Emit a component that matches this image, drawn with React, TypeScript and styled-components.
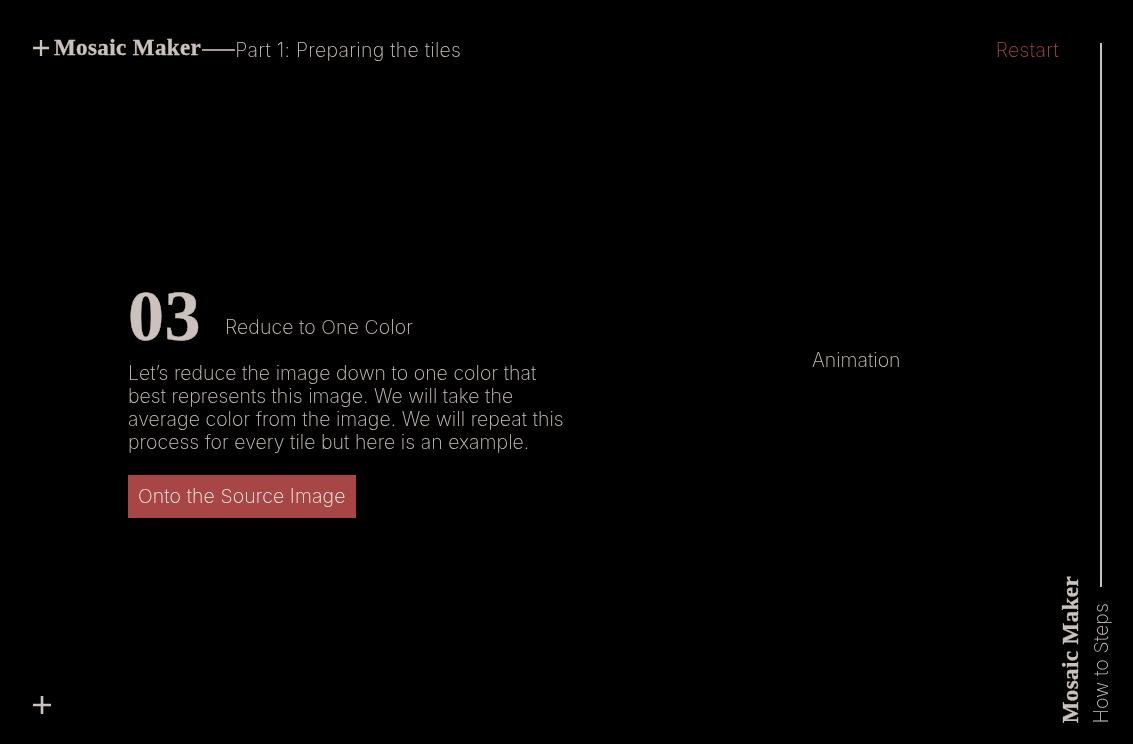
import React from 'react';
import styled, { createGlobalStyle } from 'styled-components';

const colors = {
  TAUPE: '#cbc1bd',
  TAUPE_DIM: '#a39b98',
  RED: '#a84646',
  WHITE: '#f4efee',
};

const sans = `Inter, 'Liberation Sans', sans-serif`;
const serif = `'Liberation Serif', serif`;

const GlobalStyle = createGlobalStyle`
  html, body {
    margin: 0;
    background: #000;
  }
`;

const Page = styled.div`
  display: flex;
  width: 100%;
  height: 100vh;
  overflow: hidden;
  background: #000;
  color: ${colors.TAUPE};
  font-family: ${sans};
  font-weight: 250;
  font-size: 19.5px;
`;

const Main = styled.div`
  flex: 1;
  display: flex;
  flex-direction: column;
  padding: 36px 1px 25px 33px;
  transform: translateZ(0);
`;

const Header = styled.header`
  display: flex;
  align-items: center;
  justify-content: space-between;
  height: 28px;
`;

const HeaderLeft = styled.div`
  display: flex;
  align-items: center;
`;

const Plus = styled.svg`
  flex: none;
  fill: none;
  stroke: ${colors.TAUPE};
  stroke-width: 2.6;
`;

const HeaderPlus = styled(Plus)`
  margin-top: -4px;
`;

const Brand = styled.span`
  margin: -4px 1px 0 5px;
  font-family: ${serif};
  font-size: 23px;
  font-weight: 700;
  line-height: 24px;
  letter-spacing: 0.4px;
  -webkit-text-stroke: 0.3px ${colors.TAUPE};
`;

const Dash = styled.span`
  width: 33px;
  height: 2px;
  background: ${colors.TAUPE_DIM};
`;

const Part = styled.span`
  line-height: 28px;
  letter-spacing: 0.28px;
`;

const Restart = styled.button`
  padding: 0;
  border: 0;
  background: none;
  color: ${colors.RED};
  font: inherit;
  letter-spacing: 0.3px;
`;

const Content = styled.main`
  flex: 1;
  display: flex;
  align-items: flex-start;
  padding: 216px 0 0 95px;
`;

const Step = styled.section`
  width: 445px;
`;

const StepTitle = styled.div`
  display: flex;
  align-items: flex-end;
  gap: 24px;
`;

const StepNumber = styled.span`
  font-family: ${serif};
  font-size: 72px;
  font-weight: 700;
  line-height: 72px;
  letter-spacing: 0.5px;
  -webkit-text-stroke: 0.4px ${colors.TAUPE};
`;

const StepName = styled.span`
  margin-bottom: 11px;
  line-height: 28px;
  letter-spacing: 0.08px;
`;

const StepText = styled.p`
  margin: 10px 0 21px;
  line-height: 23px;
  letter-spacing: 0.04px;
`;

const NextButton = styled.button`
  display: block;
  height: 43px;
  padding: 0 10px 2px;
  border: 0;
  background: ${colors.RED};
  color: ${colors.WHITE};
  font: inherit;
  letter-spacing: 0.1px;
`;

const Animation = styled.div`
  margin: 66px 0 0 239px;
  line-height: 28px;
`;

const Footer = styled.footer`
  display: flex;
  height: 28px;
  align-items: center;
`;

const Rail = styled.aside`
  display: flex;
  align-items: flex-end;
  gap: 8px;
  padding: 43px 21px 21px 0;
  transform: translateZ(0);
`;

const RailBrand = styled.span`
  writing-mode: vertical-rl;
  transform: rotate(180deg);
  font-family: ${serif};
  font-size: 23px;
  font-weight: 700;
  line-height: 22px;
  letter-spacing: 0.4px;
  -webkit-text-stroke: 0.3px ${colors.TAUPE};
`;

const RailTrack = styled.div`
  display: flex;
  flex-direction: column;
  align-items: center;
  align-self: stretch;
`;

const RailLine = styled.div`
  flex: 1;
  width: 2px;
  margin-bottom: 16px;
  background: ${colors.TAUPE};
`;

const RailLabel = styled.span`
  writing-mode: vertical-rl;
  transform: rotate(180deg);
  line-height: 22px;
  letter-spacing: 0.15px;
`;

const App: React.FC = () => (
  <>
    <GlobalStyle />
    <Page>
      <Main>
        <Header>
          <HeaderLeft>
            <HeaderPlus width={16} height={16} viewBox="0 0 18 18">
              <path d="M9 0V18M0 9H18" />
            </HeaderPlus>
            <Brand>Mosaic Maker</Brand>
            <Dash />
            <Part>Part 1: Preparing the tiles</Part>
          </HeaderLeft>
          <Restart>Restart</Restart>
        </Header>

        <Content>
          <Step>
            <StepTitle>
              <StepNumber>03</StepNumber>
              <StepName>Reduce to One Color</StepName>
            </StepTitle>
            <StepText>
              Let’s reduce the image down to one color that
              <br />
              best represents this image. We will take the
              <br />
              average color from the image. We will repeat this
              <br />
              process for every tile but here is an example.
            </StepText>
            <NextButton>Onto the Source Image</NextButton>
          </Step>
          <Animation>Animation</Animation>
        </Content>

        <Footer>
          <Plus width={18} height={18} viewBox="0 0 18 18">
            <path d="M9 0V18M0 9H18" />
          </Plus>
        </Footer>
      </Main>

      <Rail>
        <RailBrand>Mosaic Maker</RailBrand>
        <RailTrack>
          <RailLine />
          <RailLabel>How to Steps</RailLabel>
        </RailTrack>
      </Rail>
    </Page>
  </>
);

export default App;
